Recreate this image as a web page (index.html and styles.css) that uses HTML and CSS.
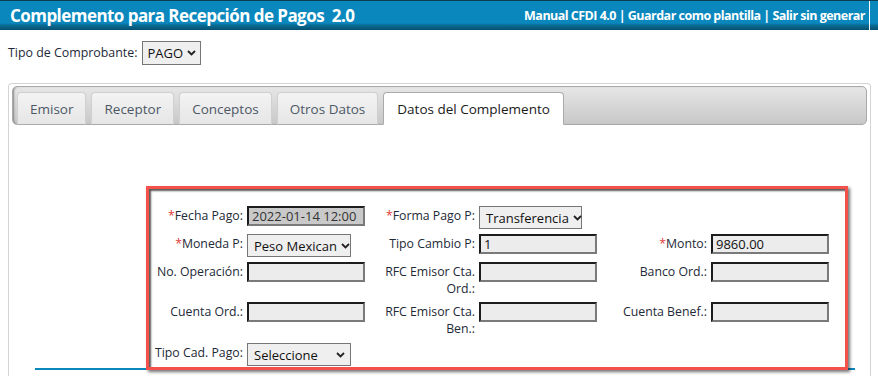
FILE: index.html
```html
<!DOCTYPE html>
<html lang="es">
<head>
<meta charset="utf-8">
<title>Complemento para Recepción de Pagos 2.0</title>
<link rel="stylesheet" href="styles.css">
</head>
<body>
<header class="topbar">
  <h1 class="title">Complemento para Recepción de Pagos&nbsp; 2.0</h1>
  <nav class="links"><span>Manual CFDI 4.0 | Guardar como plantilla | Salir sin generar</span></nav>
</header>

<div class="tipo-row">
  <span class="lbl">Tipo de Comprobante:</span>
  <div class="fsel fsel-pago"><span class="fsel-text">PAGO</span><svg class="chev" viewBox="0 0 9 6" width="9" height="6"><path d="M1 1 L4.5 4.5 L8 1" fill="none" stroke="#222" stroke-width="1.8"/></svg></div>
</div>

<div class="tabs">
  <div class="tabbar">
    <div class="tab">Emisor</div>
    <div class="tab">Receptor</div>
    <div class="tab">Conceptos</div>
    <div class="tab">Otros Datos</div>
    <div class="tab active">Datos del Complemento</div>
  </div>
  <div class="panel">
    <div class="formbox">
      <table class="form">
        <colgroup>
          <col class="c-lbl1"><col class="c-in"><col class="c-lbl"><col class="c-in"><col class="c-lbl"><col class="c-in">
        </colgroup>
        <tr class="r1">
          <td class="l"><span class="req">*</span>Fecha Pago:</td>
          <td><div class="inp disabled">2022-01-14 12:00</div></td>
          <td class="l"><span class="req">*</span>Forma Pago P:</td>
          <td><div class="fsel fsel-forma"><span class="fsel-text">Transferencia</span><svg class="chev" viewBox="0 0 9 6" width="9" height="6"><path d="M1 1 L4.5 4.5 L8 1" fill="none" stroke="#222" stroke-width="1.8"/></svg></div></td>
          <td></td><td></td>
        </tr>
        <tr class="r2">
          <td class="l"><span class="req">*</span>Moneda P:</td>
          <td><div class="fsel fsel-w"><span class="fsel-text">Peso Mexican</span><svg class="chev" viewBox="0 0 9 6" width="9" height="6"><path d="M1 1 L4.5 4.5 L8 1" fill="none" stroke="#222" stroke-width="1.8"/></svg></div></td>
          <td class="l">Tipo Cambio P:</td>
          <td><div class="inp">1</div></td>
          <td class="l"><span class="req">*</span>Monto:</td>
          <td><div class="inp">9860.00</div></td>
        </tr>
        <tr class="r3">
          <td class="l">No. Operación:</td>
          <td><div class="inp"></div></td>
          <td class="l">RFC Emisor Cta. Ord.:</td>
          <td><div class="inp"></div></td>
          <td class="l">Banco Ord.:</td>
          <td><div class="inp"></div></td>
        </tr>
        <tr class="r4">
          <td class="l">Cuenta Ord.:</td>
          <td><div class="inp"></div></td>
          <td class="l">RFC Emisor Cta. Ben.:</td>
          <td><div class="inp"></div></td>
          <td class="l">Cuenta Benef.:</td>
          <td><div class="inp"></div></td>
        </tr>
        <tr class="r5">
          <td class="l">Tipo Cad. Pago:</td>
          <td><div class="fsel fsel-w"><span class="fsel-text">Seleccione</span><svg class="chev" viewBox="0 0 9 6" width="9" height="6"><path d="M1 1 L4.5 4.5 L8 1" fill="none" stroke="#222" stroke-width="1.8"/></svg></div></td>
          <td></td><td></td><td></td><td></td>
        </tr>
      </table>
    </div>
    <div class="sepline"></div>
  </div>
</div>
</body>
</html>
```

FILE: styles.css
```css
* { box-sizing: border-box; }
html, body { margin: 0; padding: 0; background: #fff; }
body {
  font-family: "Open Sans", "Noto Sans", "DejaVu Sans", sans-serif;
  color: #1e2a38;
  width: 878px;
  height: 376px;
  overflow: hidden;
}

/* header */
.topbar {
  height: 30px;
  display: flex;
  align-items: center;
  justify-content: space-between;
  padding-left: 10px;
  border-top: 1px solid #0b3d55;
  background: linear-gradient(to bottom, #0a88bd 0%, #0a88bd 76%, #0a6a93 84%, #07506f 100%);
  color: #fff;
}
.title {
  margin: 0;
  font-size: 17px;
  font-weight: 700;
  letter-spacing: -0.55px;
  white-space: nowrap;
}
.links {
  height: 100%;
  display: flex;
  align-items: center;
  font-size: 12.5px;
  font-weight: 700;
  letter-spacing: -0.52px;
  padding-right: 8px;
}
.links span {
  display: flex;
  align-items: center;
  height: 100%;
  padding-right: 4px;
  border-right: 1px solid #fff;
}

/* tipo row */
.tipo-row {
  display: flex;
  gap: 4px;
  padding: 11px 8px 0;
  height: 53px;
  align-items: flex-start;
}
.tipo-row .lbl {
  font-size: 12.4px;
  line-height: 24px;
  color: #1e2a38;
}

/* fake select */
.fsel {
  display: inline-flex;
  align-items: center;
  justify-content: space-between;
  height: 23px;
  border: 1px solid #767676;
  background: #efefef;
  padding: 0 5px 0 6px;
  font-size: 13px;
  color: #111;
}
.fsel-text { white-space: nowrap; }
.chev { flex: none; margin-left: 4px; }
.fsel-pago { width: 59px; height: 24px; padding-left: 5px; }
.fsel-forma { width: 103px; }
.fsel-w { width: 104px; }

/* tabs */
.tabs {
  margin: 0 7px 0 8px;
  border: 1px solid #d4d4d4;
  border-bottom: none;
  border-radius: 4px 4px 0 0;
  padding: 2px 3px 0;
  height: 300px;
}
.tabbar {
  height: 39px;
  display: flex;
  align-items: flex-end;
  gap: 5px;
  padding-left: 4px;
  border: 1px solid #a9a9a9;
  border-radius: 5px;
  background: linear-gradient(to bottom, #e6e6e6 0%, #c8c8c8 100%);
  box-shadow: inset 2px 0 2px -1px #888;
}
.tab {
  height: 33px;
  margin-bottom: -1px;
  padding: 0 12px;
  line-height: 32px;
  font-size: 13.5px;
  color: #4d5866;
  border: 1px solid #d0d0d0;
  border-bottom: 1px solid #a9a9a9;
  border-radius: 4px 4px 0 0;
  background: linear-gradient(to bottom, #f3f3f3 0%, #e6e6e6 100%);
  white-space: nowrap;
}
.tab.active {
  background: #fff;
  color: #1a1a1a;
  border-color: #aaaaaa;
  border-bottom-color: #fff;
  padding: 0 13px;
}

/* panel */
.panel {
  padding: 61px 0 0 134px;
}
.formbox {
  position: relative;
  z-index: 1;
  width: 702px;
  height: 184px;
  border: 3px solid #f4514a;
  background: #fff;
  padding-top: 14px;
  box-shadow: 2px 2px 3px rgba(0, 0, 0, 0.55), inset 2px 2px 2px rgba(0, 0, 0, 0.65);
}
.sepline {
  margin: -2px 0 0 -111px;
  width: 820px;
  border-top: 2px solid #0a87bb;
}

.form {
  table-layout: fixed;
  border-collapse: collapse;
  width: 682px;
  font-size: 12.3px;
}
.c-lbl1 { width: 96px; }
.c-in { width: 122px; }
.c-lbl { width: 110px; }
.form td {
  padding: 3px 2px 2px;
  vertical-align: top;
}
.form td.l {
  text-align: right;
  line-height: 17px;
  padding-top: 4px;
  color: #1e2a38;
}
.req { color: #e03a3a; }
.r1 { height: 28px; }
.r2 { height: 28px; }
.r3 { height: 40px; }
.r4 { height: 41px; }

.inp {
  width: 118px;
  height: 20px;
  border: 2px solid;
  border-color: #1c1c1c #7a7a7a #7a7a7a #1c1c1c;
  background: #ececec;
  font-size: 13px;
  line-height: 16px;
  padding: 0 3px;
  color: #111;
  white-space: nowrap;
  overflow: hidden;
}
.inp.disabled { background: #c9c9c9; color: #333; }
```
